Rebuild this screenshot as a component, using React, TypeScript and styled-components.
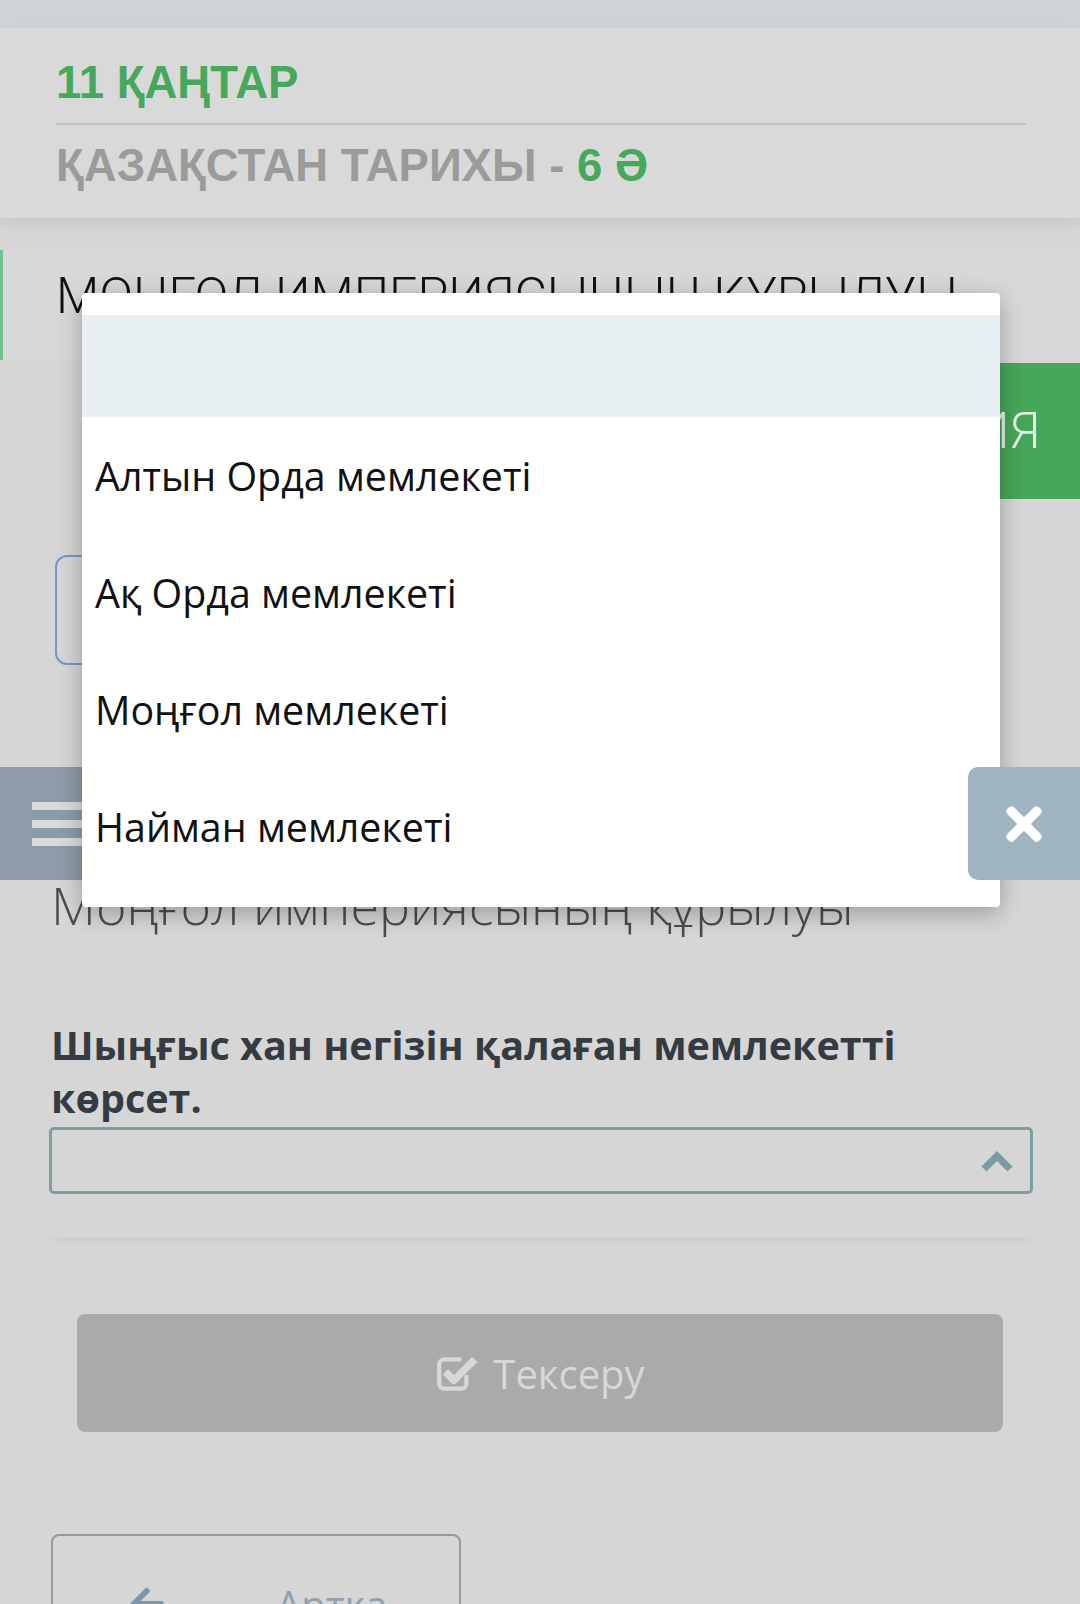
import React from "react";
import styled, { createGlobalStyle } from "styled-components";
import { FaArrowLeft, FaTimes } from "react-icons/fa";

const GlobalStyle = createGlobalStyle`
  body {
    margin: 0;
    background: #d6d6d6;
    font-family: "Open Sans", "Liberation Sans", sans-serif;
  }
`;

const Page = styled.div`
  position: relative;
  width: 1080px;
  min-height: 1604px;
  overflow: hidden;
  display: flex;
  flex-direction: column;
  background: #d6d6d6;
`;

const TopStrip = styled.div`
  height: 28px;
  background: #cfd3d5;
`;

const Header = styled.header`
  position: relative;
  z-index: 1;
  background: #d9d9d9;
  padding: 30px 54px 27px 56px;
  box-shadow: 0 6px 14px rgba(0, 0, 0, 0.07);
`;

const HeaderLine = styled.div<{ $muted?: boolean }>`
  font-family: "Liberation Sans", Arial, sans-serif;
  font-weight: 700;
  font-size: 45.5px;
  line-height: 50px;
  color: ${(p) => (p.$muted ? "#9b9b9b" : "#45a85b")};
  span {
    color: #45a85b;
  }
`;

const Divider = styled.hr`
  margin: 15px 0 16px;
  border: 0;
  height: 2px;
  background: #c3c3c3;
`;

const TopicCard = styled.div`
  margin-top: 32px;
  height: 110px;
  box-sizing: border-box;
  background: #d7d8d8;
  border-left: 3px solid #71c08f;
  padding: 16px 0 0 53px;
  font-family: Roboto, sans-serif;
  font-weight: 300;
  font-size: 50px;
  line-height: 60px;
  color: #111;
  white-space: nowrap;
  overflow: hidden;
`;

const TheoryTab = styled.div`
  align-self: flex-end;
  margin-top: 3px;
  height: 136px;
  display: flex;
  align-items: center;
  padding: 0 40px 0 80px;
  background: #46a659;
  color: #e4f1e7;
  font-family: Roboto, sans-serif;
  font-weight: 300;
  font-size: 50px;
`;

const OutlineButton = styled.div`
  margin: 56px 0 0 55px;
  width: 420px;
  height: 110px;
  box-sizing: border-box;
  border: 2px solid #6b9ccb;
  border-radius: 12px;
`;

const Toolbar = styled.div`
  margin-top: 102px;
  height: 113px;
  display: flex;
  justify-content: space-between;
`;

const MenuButton = styled.div`
  width: 150px;
  background: #8d9ca8;
  display: flex;
  flex-direction: column;
  justify-content: center;
  gap: 10px;
  padding-left: 32px;
  box-sizing: border-box;
`;

const MenuBar = styled.div`
  height: 8px;
  width: 100px;
  background: #d8dadb;
`;

const CloseButton = styled.div`
  position: relative;
  z-index: 6;
  width: 112px;
  background: #9fb4c1;
  border-radius: 10px 0 0 10px;
  display: flex;
  align-items: center;
  justify-content: center;
  color: #fff;
  font-size: 52px;
`;

const LessonTitle = styled.div`
  padding-left: 51px;
  font-weight: 300;
  font-size: 52px;
  line-height: 49px;
  color: #4c4c4c;
  white-space: nowrap;
`;

const QuestionCard = styled.div`
  margin: 90px 47px 0 49px;
  padding-bottom: 44px;
  box-shadow: 0 8px 10px -6px rgba(0, 0, 0, 0.08);
`;

const QuestionText = styled.div`
  padding-left: 2px;
  font-weight: 700;
  font-size: 39.5px;
  line-height: 53px;
  color: #353b42;
`;

const Select = styled.div`
  margin-top: 2px;
  height: 67px;
  box-sizing: border-box;
  border: 3px solid #7d9ea2;
  border-radius: 5px;
  display: flex;
  align-items: center;
  justify-content: flex-end;
  padding-right: 16px;
`;

const CheckButton = styled.div`
  margin: 76px 77px 0;
  height: 118px;
  border-radius: 8px;
  background: #aaaaaa;
  color: #d8d8d8;
  display: flex;
  align-items: center;
  justify-content: center;
  gap: 14px;
  font-size: 40px;
`;

const BackButton = styled.div`
  margin: 102px 0 0 51px;
  width: 410px;
  height: 110px;
  box-sizing: border-box;
  border: 2px solid #8f9aa3;
  border-radius: 8px;
  display: flex;
  align-items: center;
  padding: 30px 0 0 75px;
  gap: 110px;
  color: #8fa1ae;
  font-size: 40px;
  svg {
    color: #7f97a8;
  }
`;

const Dialog = styled.div`
  position: absolute;
  left: 82px;
  top: 293px;
  width: 918px;
  padding: 22px 0;
  background: #fff;
  border-radius: 4px;
  box-shadow: 0 6px 24px rgba(0, 0, 0, 0.28);
  z-index: 5;
`;

const Option = styled.div<{ $selected?: boolean }>`
  height: ${(p) => (p.$selected ? 102 : 117)}px;
  display: flex;
  align-items: center;
  padding-left: 13px;
  background: ${(p) => (p.$selected ? "#e9f0f3" : "#fff")};
  font-size: 39.4px;
  color: #111;
`;

const CheckIcon = () => (
  <svg width="44" height="42" viewBox="0 0 42 40">
    <path
      d="M30 22v8a5 5 0 0 1-5 5H9a5 5 0 0 1-5-5V12a5 5 0 0 1 5-5h16"
      fill="none"
      stroke="currentColor"
      strokeWidth="4"
    />
    <path d="M10 19l8 8L38 7" fill="none" stroke="currentColor" strokeWidth="7" strokeLinejoin="round" />
  </svg>
);

const Chevron = () => (
  <svg width="34" height="24" viewBox="0 0 34 24">
    <path d="M4 20L17 7l13 13" fill="none" stroke="#789ca1" strokeWidth="7" />
  </svg>
);

const options = ["Алтын Орда мемлекеті", "Ақ Орда мемлекеті", "Моңғол мемлекеті", "Найман мемлекеті"];

export default function App() {
  return (
    <Page>
      <GlobalStyle />
      <TopStrip />
      <Header>
        <HeaderLine>11 ҚАҢТАР</HeaderLine>
        <Divider />
        <HeaderLine $muted>
          ҚАЗАҚСТАН ТАРИХЫ - <span>6 Ә</span>
        </HeaderLine>
      </Header>
      <TopicCard>МОҢҒОЛ ИМПЕРИЯСЫНЫҢ ҚҰРЫЛУЫ</TopicCard>
      <TheoryTab>ТЕОРИЯ</TheoryTab>
      <OutlineButton />
      <Toolbar>
        <MenuButton>
          <MenuBar />
          <MenuBar />
          <MenuBar />
        </MenuButton>
        <CloseButton>
          <FaTimes />
        </CloseButton>
      </Toolbar>
      <LessonTitle>Моңғол империясының құрылуы</LessonTitle>
      <QuestionCard>
        <QuestionText>Шыңғыс хан негізін қалаған мемлекетті көрсет.</QuestionText>
        <Select>
          <Chevron />
        </Select>
      </QuestionCard>
      <CheckButton>
        <CheckIcon />
        Тексеру
      </CheckButton>
      <BackButton>
        <FaArrowLeft size={38} />
        Артка
      </BackButton>
      <Dialog>
        <Option $selected />
        {options.map((o) => (
          <Option key={o}>{o}</Option>
        ))}
      </Dialog>
    </Page>
  );
}
